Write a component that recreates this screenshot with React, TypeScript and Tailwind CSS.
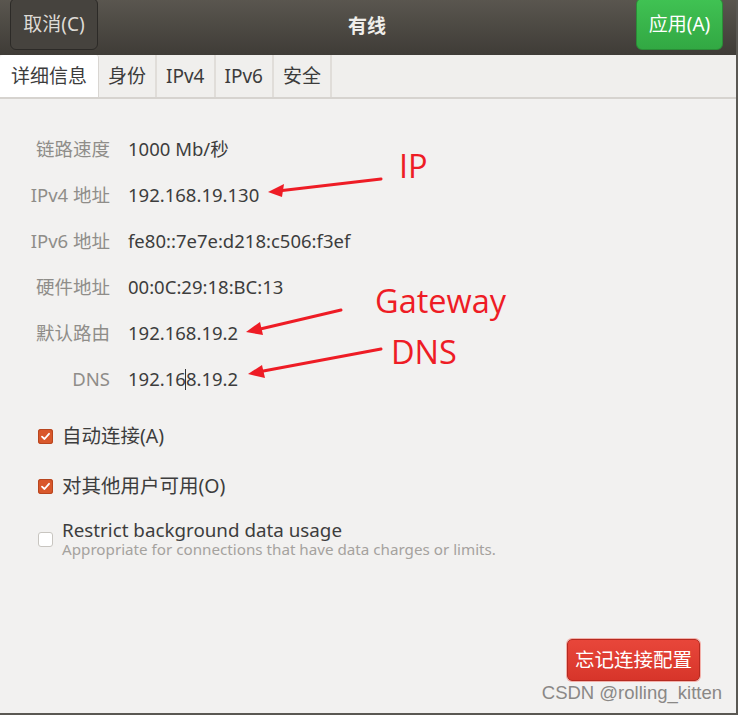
import { FC } from 'react';

const rows: [string, string][] = [
  ['链路速度', '1000 Mb/秒'],
  ['IPv4 地址', '192.168.19.130'],
  ['IPv6 地址', 'fe80::7e7e:d218:c506:f3ef'],
  ['硬件地址', '00:0C:29:18:BC:13'],
  ['默认路由', '192.168.19.2'],
  ['DNS', '192.168.19.2'],
];

const tabs = ['详细信息', '身份', 'IPv4', 'IPv6', '安全'];

const Check: FC<{ on: boolean }> = ({ on }) =>
  on ? (
    <span className="flex h-[15px] w-[15px] shrink-0 items-center justify-center rounded-[3px] bg-[#d9582b] shadow-[inset_0_0_0_1px_#b8461f]">
      <svg width="11" height="11" viewBox="0 0 11 11">
        <path d="M2 5.6 L4.5 8 L9 2.8" fill="none" stroke="#fff" strokeWidth="1.8" strokeLinecap="round" strokeLinejoin="round" />
      </svg>
    </span>
  ) : (
    <span className="h-[15px] w-[15px] shrink-0 rounded-[3px] border border-[#c8c5c0] bg-white" />
  );

export default function App() {
  const font = { fontFamily: '"Noto Sans", "Noto Sans CJK SC", sans-serif' };
  const red = { fontFamily: '"Open Sans", sans-serif' };
  return (
    <div
      className="relative flex h-[715px] w-[738px] flex-col overflow-hidden border-r-2 border-b-2 border-[#5a5853] bg-[#f2f1f0]"
      style={font}
    >
      {/* header bar */}
      <div className="flex h-[55px] items-start justify-between bg-gradient-to-b from-[#5a564f] to-[#3f3c37] px-[10px]">
        <button className="mt-[-2px] flex h-[52px] w-[88px] items-center justify-center rounded-[6px] border border-[#2c2a27] bg-[#46433e] text-[19px] text-[#dedbd6]">
          取消(C)
        </button>
        <div className="pt-[12px] text-[19px] font-bold text-[#f0eeea]">有线</div>
        <button className="mt-[-2px] mr-[3px] flex h-[52px] w-[87px] items-center justify-center rounded-[6px] border border-[#2b8d37] bg-gradient-to-b from-[#40c253] to-[#32a843] text-[19px] text-white">
          应用(A)
        </button>
      </div>

      {/* tabs */}
      <div className="flex h-[44px] border-b-2 border-[#d6d3cf] bg-[#f0efed]">
        {tabs.map((t, i) => (
          <div
            key={t}
            className={
              i === 0
                ? 'flex items-center rounded-t-[3px] border-r border-[#d9d6d2] bg-white px-[11px] text-[19px] text-[#3c3c3c]'
                : 'flex items-center border-r-2 border-[#e0ddd9] px-[9px] text-[19px] text-[#3c3c3c]'
            }
          >
            {t}
          </div>
        ))}
      </div>

      {/* details */}
      <div className="mt-[27px] grid grid-cols-[110px_1fr] gap-x-[18px]">
        {rows.map(([k, v], i) => (
          <div key={k} className="contents">
            <div className="flex h-[46px] items-center justify-end text-[18.5px] text-[#8f8d89]">{k}</div>
            <div className="flex h-[46px] items-center text-[18.5px] text-[#3d3d3d]">
              {i === 5 ? (
                <>
                  192.16<span className="mx-[-0.5px] inline-block h-[21px] w-[1px] bg-[#333]" />8.19.2
                </>
              ) : (
                v
              )}
            </div>
          </div>
        ))}
      </div>

      {/* options */}
      <div className="mt-[20px] flex flex-col pl-[38px]">
        <label className="flex h-[28px] items-center gap-[9px] text-[19.5px] text-[#3d3d3d]">
          <Check on />
          自动连接(A)
        </label>
        <label className="mt-[22px] flex h-[28px] items-center gap-[9px] text-[19.5px] text-[#3d3d3d]">
          <Check on />
          对其他用户可用(O)
        </label>
        <label className="mt-[20px] flex items-center gap-[9px]">
          <Check on={false} />
          <div className="flex flex-col">
            <span className="text-[18.8px] leading-[20px] text-[#3d3d3d]">Restrict background data usage</span>
            <span className="text-[15.2px] leading-[18px] text-[#a5a29e]">
              Appropriate for connections that have data charges or limits.
            </span>
          </div>
        </label>
      </div>

      <div className="flex flex-1 items-end justify-end pr-[36px] pb-[32px]">
        <button className="flex h-[42px] w-[133px] items-center justify-center rounded-[5px] border border-[#b52a20] bg-gradient-to-b from-[#e8463a] to-[#d7352a] text-[19.5px] text-white shadow-[0_0_0_1px_#f3b0aa]">
          忘记连接配置
        </button>
      </div>

      {/* watermark */}
      <div
        className="absolute right-[14px] bottom-[6px] text-[18.5px] text-[#8a8886]"
        style={{ fontFamily: '"Liberation Sans", sans-serif' }}
      >
        CSDN @rolling_kitten
      </div>

      {/* red annotations */}
      <svg className="pointer-events-none absolute top-0 left-0" width="738" height="715">
        <g stroke="#ee1c25" strokeWidth="3" strokeLinecap="round" fill="none">
          <line x1="381" y1="179" x2="278" y2="191" />
          <line x1="341" y1="310" x2="256" y2="330" />
          <line x1="381" y1="349" x2="258" y2="372" />
        </g>
        <g fill="#ee1c25">
          <path d="M268 192 L284 184 L282 197 Z" />
          <path d="M246 332 L260 322 L263 335 Z" />
          <path d="M248 374 L262 365 L265 378 Z" />
        </g>
      </svg>
      <div className="absolute top-[146px] left-[399px] text-[32.5px] leading-[40px] text-[#ee1c25]" style={red}>
        IP
      </div>
      <div className="absolute top-[281px] left-[375px] text-[32.5px] leading-[40px] text-[#ee1c25]" style={red}>
        Gateway
      </div>
      <div className="absolute top-[332px] left-[391px] text-[32.5px] leading-[40px] text-[#ee1c25]" style={red}>
        DNS
      </div>
    </div>
  );
}
